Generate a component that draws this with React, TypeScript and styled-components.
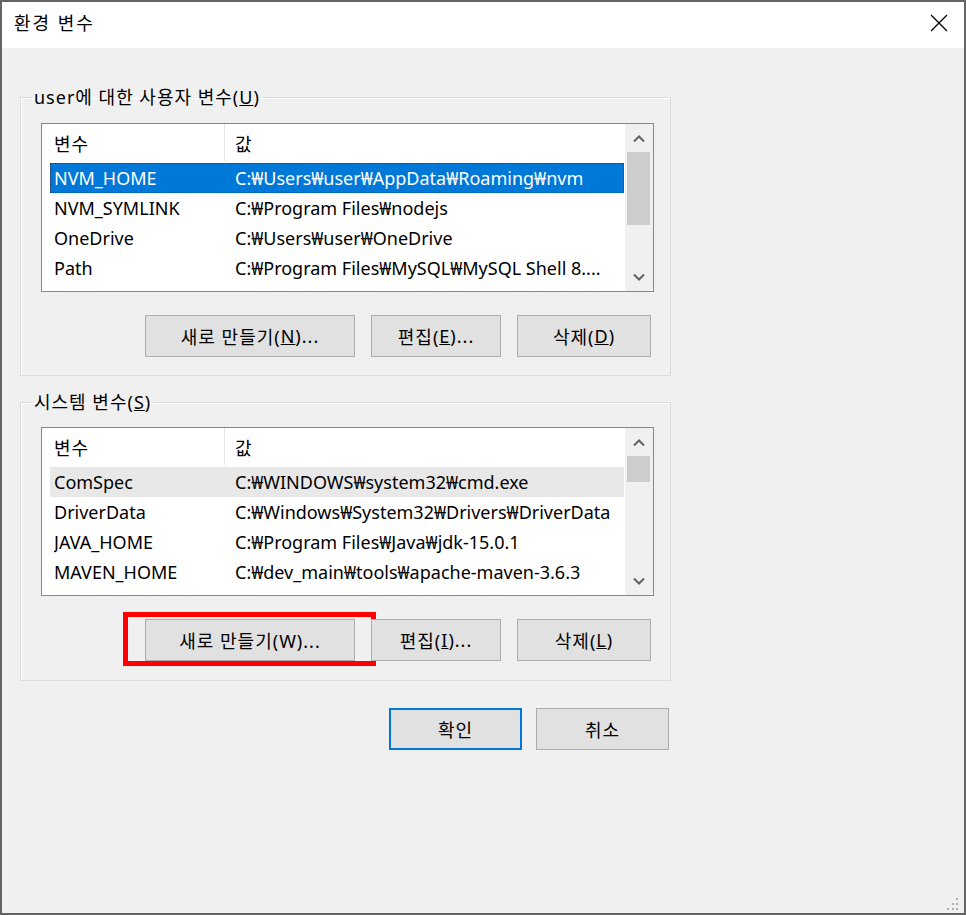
import React from "react";
import styled, { createGlobalStyle } from "styled-components";

const GlobalStyle = createGlobalStyle`
  html, body { margin: 0; padding: 0; background: #ffffff; }
  * { box-sizing: border-box; }
  body { font-family: "Noto Sans", "Noto Sans CJK KR", sans-serif; }
`;

const FONT = `"Noto Sans", "Noto Sans CJK KR", sans-serif`;

const Window = styled.div`
  position: relative;
  width: 966px;
  height: 915px;
  border: 2px solid #646464;
  background: #f0f0f0;
  display: flex;
  flex-direction: column;
  font-family: ${FONT};
  color: #000;
`;

const TitleBar = styled.div`
  height: 46px;
  background: #ffffff;
  display: flex;
  align-items: center;
  justify-content: space-between;
  padding: 0 15px 0 12px;
`;

const Title = styled.div`
  font-size: 18px;
  line-height: 20px;
  letter-spacing: 2px;
  margin-top: -4px;
`;

const CloseButton = styled.div`
  width: 20px;
  height: 20px;
  display: flex;
  align-items: center;
  justify-content: center;
  margin-top: -4px;
`;

const Body = styled.div`
  flex: 1;
  display: flex;
  flex-direction: column;
  padding: 39px 0 0 18px;
`;

const Group = styled.fieldset<{ $top: number; $bottom: number; $mt?: number }>`
  width: 651px;
  margin: ${(p) => p.$mt ?? 0}px 0 0 0;
  padding: ${(p) => p.$top}px 16px ${(p) => p.$bottom}px 20px;
  border: 1px solid #dcdcdc;
  box-shadow: inset 1px 1px 0 #ffffff;
  min-width: 0;
`;

const Legend = styled.legend`
  font-size: 18px;
  line-height: 20px;
  letter-spacing: 1px;
  padding: 0 2px;
  margin-left: -9px;
`;

const ListBox = styled.div`
  width: 613px;
  height: 169px;
  border: 1px solid #828790;
  background: #ffffff;
  display: flex;
  overflow: hidden;
`;

const ListContent = styled.div`
  flex: 1;
  display: flex;
  flex-direction: column;
  overflow: hidden;
`;

const Header = styled.div`
  display: grid;
  grid-template-columns: 183px 1fr;
  height: 37px;
  flex: none;
  font-size: 18px;
  letter-spacing: 1px;
`;

const HeaderCell = styled.div<{ $divider?: boolean }>`
  display: flex;
  align-items: center;
  padding-left: ${(p) => (p.$divider ? 12 : 10)}px;
  border-right: ${(p) => (p.$divider ? "1px solid #e5e5e5" : "none")};
`;

const Rows = styled.div`
  padding: 2px 1px 0 8px;
  display: flex;
  flex-direction: column;
`;

const Row = styled.div<{ $state?: "selected" | "hover" }>`
  display: grid;
  grid-template-columns: 181px 1fr;
  height: 30px;
  flex: none;
  align-items: center;
  padding-left: 4px;
  font-size: 18px;
  white-space: nowrap;
  background: ${(p) =>
    p.$state === "selected" ? "#0078d7" : p.$state === "hover" ? "#e8e8e8" : "transparent"};
  color: ${(p) => (p.$state === "selected" ? "#ffffff" : "#000000")};
  outline: ${(p) => (p.$state === "selected" ? "1px dotted #1b3f72" : "none")};
  outline-offset: -1px;
`;

const Cell = styled.span`
  overflow: hidden;
  text-overflow: clip;
`;

const ScrollBar = styled.div`
  width: 28px;
  flex: none;
  background: #f0f0f0;
  display: flex;
  flex-direction: column;
`;

const ArrowBox = styled.div`
  height: 28px;
  flex: none;
  display: flex;
  align-items: center;
  justify-content: center;
`;

const Track = styled.div`
  flex: 1;
  display: flex;
  flex-direction: column;
  padding: 0 3px 0 2px;
`;

const Thumb = styled.div<{ $h: number }>`
  height: ${(p) => p.$h}px;
  background: #cdcdcd;
`;

const ButtonRow = styled.div<{ $mt: number }>`
  display: flex;
  justify-content: flex-end;
  gap: 16px;
  padding-right: 3px;
  margin-top: ${(p) => p.$mt}px;
`;

const Button = styled.div<{ $w: number; $default?: boolean }>`
  position: relative;
  width: ${(p) => p.$w}px;
  height: 42px;
  background: #e1e1e1;
  border: ${(p) => (p.$default ? "2px solid #0078d7" : "1px solid #adadad")};
  display: flex;
  align-items: center;
  justify-content: center;
  font-size: 18px;
  letter-spacing: 1px;
  white-space: nowrap;
`;

const Highlight = styled.div`
  position: absolute;
  left: -23px;
  right: -22px;
  top: -8px;
  bottom: -6px;
  border: 5px solid #ff0000;
  pointer-events: none;
`;

const Footer = styled.div`
  width: 651px;
  display: flex;
  justify-content: flex-end;
  gap: 14px;
  padding-right: 2px;
  margin-top: 27px;
`;

const Grip = styled.div`
  position: absolute;
  right: 5px;
  bottom: 5px;
  width: 14px;
  height: 14px;
`;

const Chevron = ({ up }: { up?: boolean }) => (
  <svg width="14" height="9" viewBox="0 0 14 9">
    <polyline
      points={up ? "2,7.5 7,2.5 12,7.5" : "2,1.5 7,6.5 12,1.5"}
      fill="none"
      stroke="#606060"
      strokeWidth="2"
    />
  </svg>
);

type Item = { name: string; value: string; state?: "selected" | "hover" };

const userVars: Item[] = [
  { name: "NVM_HOME", value: "C:₩Users₩user₩AppData₩Roaming₩nvm", state: "selected" },
  { name: "NVM_SYMLINK", value: "C:₩Program Files₩nodejs" },
  { name: "OneDrive", value: "C:₩Users₩user₩OneDrive" },
  { name: "Path", value: "C:₩Program Files₩MySQL₩MySQL Shell 8...." },
];

const sysVars: Item[] = [
  { name: "ComSpec", value: "C:₩WINDOWS₩system32₩cmd.exe", state: "hover" },
  { name: "DriverData", value: "C:₩Windows₩System32₩Drivers₩DriverData" },
  { name: "JAVA_HOME", value: "C:₩Program Files₩Java₩jdk-15.0.1" },
  { name: "MAVEN_HOME", value: "C:₩dev_main₩tools₩apache-maven-3.6.3" },
];

const VarList = ({ items, thumb }: { items: Item[]; thumb: number }) => (
  <ListBox>
    <ListContent>
      <Header>
        <HeaderCell $divider>변수</HeaderCell>
        <HeaderCell>값</HeaderCell>
      </Header>
      <Rows>
        {items.map((it) => (
          <Row key={it.name} $state={it.state}>
            <Cell>{it.name}</Cell>
            <Cell>{it.value}</Cell>
          </Row>
        ))}
      </Rows>
    </ListContent>
    <ScrollBar>
      <ArrowBox>
        <Chevron up />
      </ArrowBox>
      <Track>
        <Thumb $h={thumb} />
      </Track>
      <ArrowBox>
        <Chevron />
      </ArrowBox>
    </ScrollBar>
  </ListBox>
);

export default function App() {
  return (
    <>
      <GlobalStyle />
      <Window>
        <TitleBar>
          <Title>환경 변수</Title>
          <CloseButton>
            <svg width="18" height="18" viewBox="0 0 18 18">
              <path d="M1 1 L17 17 M17 1 L1 17" stroke="#000" strokeWidth="1.3" fill="none" />
            </svg>
          </CloseButton>
        </TitleBar>
        <Body>
          <Group $top={16} $bottom={18}>
            <Legend>
              user에 대한 사용자 변수(<u>U</u>)
            </Legend>
            <VarList items={userVars} thumb={73} />
            <ButtonRow $mt={23}>
              <Button $w={210}>
                새로 만들기(<u>N</u>)...
              </Button>
              <Button $w={130}>
                편집(<u>E</u>)...
              </Button>
              <Button $w={134}>
                삭제(<u>D</u>)
              </Button>
            </ButtonRow>
          </Group>
          <Group $top={15} $bottom={19} $mt={16}>
            <Legend>
              시스템 변수(<u>S</u>)
            </Legend>
            <VarList items={sysVars} thumb={26} />
            <ButtonRow $mt={23}>
              <Button $w={210}>
                새로 만들기(W)...
                <Highlight />
              </Button>
              <Button $w={130}>
                편집(<u>I</u>)...
              </Button>
              <Button $w={134}>
                삭제(<u>L</u>)
              </Button>
            </ButtonRow>
          </Group>
          <Footer>
            <Button $w={133} $default>
              확인
            </Button>
            <Button $w={133}>취소</Button>
          </Footer>
        </Body>
        <Grip>
          <svg width="14" height="14" viewBox="0 0 14 14">
            {[
              [11, 1],
              [7, 6],
              [11, 6],
              [2, 11],
              [7, 11],
              [11, 11],
            ].map(([x, y]) => (
              <rect key={`${x}-${y}`} x={x} y={y} width="2" height="2" fill="#b0b0b0" />
            ))}
          </svg>
        </Grip>
      </Window>
    </>
  );
}
